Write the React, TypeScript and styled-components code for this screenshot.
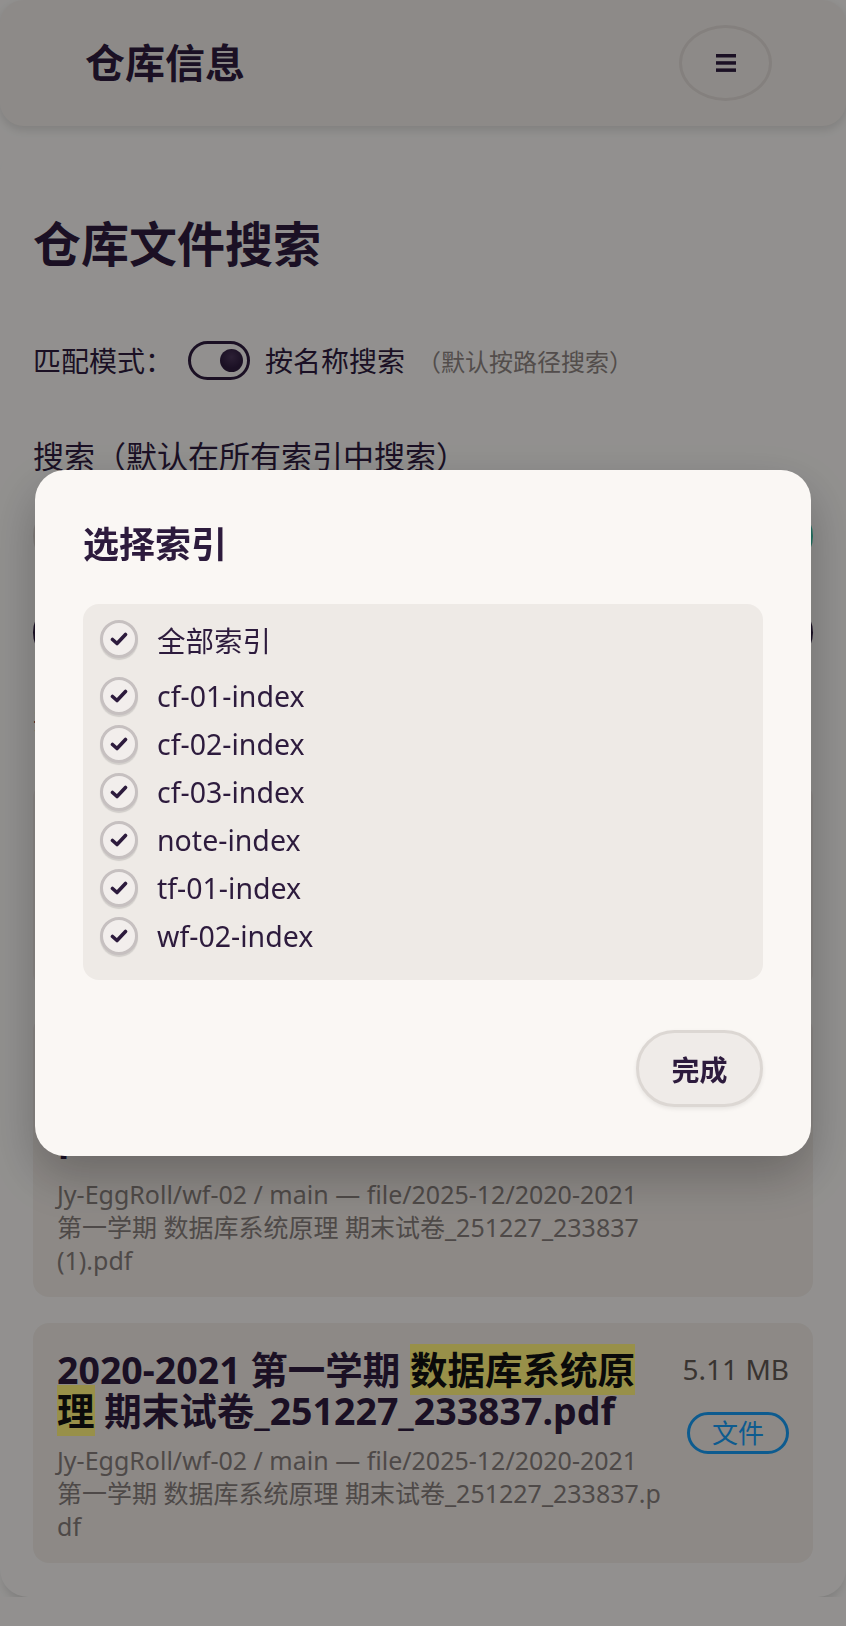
import React, {useState} from 'react';
import styled, {createGlobalStyle} from "styled-components";

const GlobalStyle = createGlobalStyle`
  * { box-sizing: border-box; }
  html, body {
    margin: 0;
    padding: 0;
    background: #f3f1ef;
    overflow: hidden;
  }
  body {
    font-family: "Noto Sans", "Noto Sans CJK SC", sans-serif;
    color: #2d1b3d;
  }
`;

const Header = styled.header`
  position: relative;
  z-index: 1;
  height: 126px;
  display: flex;
  align-items: center;
  justify-content: space-between;
  padding: 0 74px 0 85px;
  background: #ece7e3;
  border-radius: 24px;
  box-shadow: 0 4px 10px rgba(0, 0, 0, 0.12);
`;

const HeaderTitle = styled.div`
  font-size: 40px;
  font-weight: 700;
  line-height: 1;
`;

const MenuButton = styled.button`
  width: 93px;
  height: 76px;
  border-radius: 50%;
  border: 3px solid #dcd6d2;
  background: transparent;
  display: flex;
  align-items: center;
  justify-content: center;
  padding: 0;
`;

const Main = styled.main`
  margin-top: 20px;
  padding: 67px 33px 34px;
  background: #f3f1ef;
  border-radius: 28px;
  box-shadow: 0 8px 10px -4px rgba(0, 0, 0, 0.14);
`;

const PageTitle = styled.h1`
  margin: 0 0 65px;
  font-size: 48px;
  line-height: 62px;
  font-weight: 700;
`;

const ModeRow = styled.div`
  display: flex;
  align-items: center;
  height: 40px;
  font-size: 28px;
`;

const Toggle = styled.button<{ $on: boolean }>`
  width: 62px;
  height: 39px;
  margin: 0 15px;
  padding: 0 4px;
  border: 3.5px solid #2d1b3d;
  border-radius: 20px;
  background: transparent;
  display: flex;
  align-items: center;
  justify-content: ${p => (p.$on ? 'flex-end' : 'flex-start')};
`;

const Knob = styled.span`
  width: 23px;
  height: 23px;
  border-radius: 50%;
  background: radial-gradient(circle at 50% 35%, #4a3558 0%, #2d1b3d 60%);
`;

const Hint = styled.span`
  margin-left: 12px;
  font-size: 24px;
  color: #8a817e;
`;

const SearchLabel = styled.div`
  margin: 55px 0 23px;
  font-size: 31px;
  line-height: 42px;
`;

const InputRow = styled.div`
  display: flex;
  gap: 16px;
  height: 72px;
`;

const SearchInput = styled.input`
  flex: 1;
  border: 3px solid #d9d3cf;
  border-radius: 36px;
  background: #fbf9f8;
  padding: 0 28px;
  font-size: 26px;
  font-family: inherit;
`;

const SearchButton = styled.button`
  width: 150px;
  border: none;
  border-radius: 36px;
  background: #3bbfa5;
  color: #fff;
  font-size: 26px;
  font-weight: 700;
  font-family: inherit;
`;

const IndexButton = styled.button`
  width: 100%;
  margin-top: 28px;
  height: 65px;
  border: none;
  border-radius: 33px;
  background: #2d1b3d;
  color: #fff;
  font-size: 26px;
  font-family: inherit;
`;

const ResultsHeading = styled.div`
  margin: 34px 0 43px;
  font-size: 28px;
  line-height: 40px;
`;

const ResultList = styled.div`
  display: flex;
  flex-direction: column;
  gap: 26px;
`;

const Card = styled.div`
  display: flex;
  gap: 21px;
  padding: 26px 24px 20px;
  background: #ebe5e0;
  border-radius: 16px;
`;

const CardMain = styled.div`
  flex: 1;
  min-width: 0;
`;

const CardTitle = styled.div`
  font-size: 37.5px;
  font-weight: 700;
  line-height: 41.5px;
  word-break: break-all;
`;

const Mark = styled.mark`
  background: #fdf17a;
  color: #111;
`;

const CardPath = styled.div`
  margin-top: 12px;
  font-size: 25px;
  line-height: 33px;
  color: #837b78;
  word-break: break-all;
`;

const CardSide = styled.div`
  flex-shrink: 0;
  display: flex;
  flex-direction: column;
  align-items: flex-end;
`;

const Size = styled.div`
  font-size: 28px;
  line-height: 41px;
  color: #5f5753;
  white-space: nowrap;
`;

const Tag = styled.span`
  margin-top: 22px;
  font-size: 26px;
  line-height: 32px;
  padding: 2px 22px;
  border: 3.5px solid #1798ee;
  border-radius: 22px;
  color: #1798ee;
`;

const Overlay = styled.div`
  position: fixed;
  inset: 0;
  z-index: 2;
  background: rgba(0, 0, 0, 0.4);
  display: flex;
  align-items: center;
  justify-content: center;
  padding: 0 35px;
`;

const Dialog = styled.div`
  width: 100%;
  background: #faf7f4;
  border-radius: 30px;
  padding: 48px 48px 49px;
  box-shadow: 0 20px 50px rgba(0, 0, 0, 0.25);
`;

const DialogTitle = styled.h2`
  margin: 0;
  font-size: 36px;
  font-weight: 700;
  line-height: 54px;
`;

const OptionList = styled.div`
  margin-top: 32px;
  background: #eeeae6;
  border-radius: 16px;
  padding: 11px 17px 20px;
`;

const Option = styled.label<{ $all?: boolean }>`
  display: flex;
  align-items: center;
  gap: 19px;
  height: 48px;
  font-size: 28.5px;
  ${p => p.$all && 'margin-bottom: 9px;'}
`;

const Check = styled.span`
  width: 38px;
  height: 38px;
  border-radius: 50%;
  border: 3.5px solid #c6c0c0;
  background: #f2eeec;
  box-shadow: 0 2px 1px rgba(0, 0, 0, 0.12);
  display: flex;
  align-items: center;
  justify-content: center;
`;

const DialogFooter = styled.div`
  margin-top: 50px;
  display: flex;
  justify-content: flex-end;
`;

const DoneButton = styled.button`
  width: 127px;
  height: 77px;
  border-radius: 40px;
  border: 3px solid #dcd7d3;
  background: #efebe8;
  color: #2d1b3d;
  font-size: 28px;
  font-weight: 700;
  font-family: inherit;
  box-shadow: 0 2px 4px rgba(0, 0, 0, 0.08);
`;

const indexes = ['cf-01-index', 'cf-02-index', 'cf-03-index', 'note-index', 'tf-01-index', 'wf-02-index'];

const results = [
    {
        name: '期末试卷_251227_233837.pdf',
        repo: 'Jy-EggRoll/cf-01 / main — file/2025-12/2020-2021 第一学期 数据库系统原理 期末试卷_251227_233837.pdf',
        size: '5.11 MB',
    },
    {
        name: '期末试卷_251227_233837 (1).pdf',
        repo: 'Jy-EggRoll/wf-02 / main — file/2025-12/2020-2021 第一学期 数据库系统原理 期末试卷_251227_233837 (1).pdf',
        size: '5.11 MB',
    },
    {
        name: '期末试卷_251227_233837.pdf',
        repo: 'Jy-EggRoll/wf-02 / main — file/2025-12/2020-2021 第一学期 数据库系统原理 期末试卷_251227_233837.pdf',
        size: '5.11 MB',
    },
];

const CheckMark = () => (
    <svg width="18" height="14" viewBox="0 0 18 14">
        <polyline points="2.5,7.5 7,11.5 15.5,2.5" fill="none" stroke="#2d1b3d" strokeWidth="3.6"
                  strokeLinecap="round" strokeLinejoin="round"/>
    </svg>
);

const App: React.FC = () => {
    const [byName, setByName] = useState(true);
    const [selected] = useState<string[]>(indexes);
    return (
        <>
            <GlobalStyle/>
            <Header>
                <HeaderTitle>仓库信息</HeaderTitle>
                <MenuButton aria-label="menu">
                    <svg width="20" height="18" viewBox="0 0 20 18">
                        <rect x="0" y="0" width="20" height="3.5" fill="#2d1b3d"/>
                        <rect x="0" y="7.2" width="20" height="3.5" fill="#2d1b3d"/>
                        <rect x="0" y="14.4" width="20" height="3.5" fill="#2d1b3d"/>
                    </svg>
                </MenuButton>
            </Header>
            <Main>
                <PageTitle>仓库文件搜索</PageTitle>
                <ModeRow>
                    匹配模式：
                    <Toggle $on={byName} onClick={() => setByName(!byName)}><Knob/></Toggle>
                    按名称搜索
                    <Hint>（默认按路径搜索）</Hint>
                </ModeRow>
                <SearchLabel>搜索（默认在所有索引中搜索）</SearchLabel>
                <InputRow>
                    <SearchInput defaultValue="数据库系统原理"/>
                    <SearchButton>搜索</SearchButton>
                </InputRow>
                <IndexButton>选择索引</IndexButton>
                <ResultsHeading>共 {results.length} 条结果</ResultsHeading>
                <ResultList>
                    {results.map((r, i) => (
                        <Card key={i}>
                            <CardMain>
                                <CardTitle>
                                    2020-2021 第一学期 <Mark>数据库系统原理</Mark> {r.name}
                                </CardTitle>
                                <CardPath>{r.repo}</CardPath>
                            </CardMain>
                            <CardSide>
                                <Size>{r.size}</Size>
                                <Tag>文件</Tag>
                            </CardSide>
                        </Card>
                    ))}
                </ResultList>
            </Main>
            <Overlay>
                <Dialog>
                    <DialogTitle>选择索引</DialogTitle>
                    <OptionList>
                        <Option $all>
                            <Check><CheckMark/></Check>
                            全部索引
                        </Option>
                        {indexes.map(name => (
                            <Option key={name}>
                                <Check>{selected.includes(name) && <CheckMark/>}</Check>
                                {name}
                            </Option>
                        ))}
                    </OptionList>
                    <DialogFooter>
                        <DoneButton>完成</DoneButton>
                    </DialogFooter>
                </Dialog>
            </Overlay>
        </>
    );
};

export default App;
